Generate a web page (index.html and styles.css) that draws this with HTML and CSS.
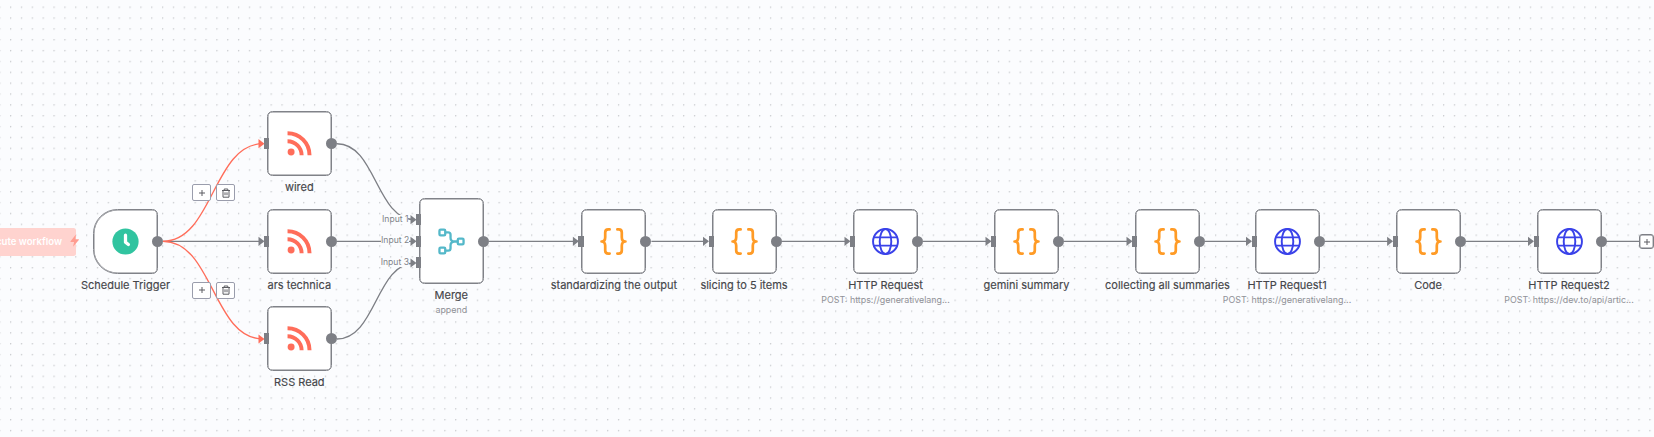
FILE: index.html
```
<!DOCTYPE html>
<html lang="en">
<head>
<meta charset="utf-8">
<title>Workflow canvas</title>
<link rel="stylesheet" href="styles.css">
</head>
<body>
<main class="canvas" id="canvas">
  <svg class="edges" id="edges" width="1654" height="437">
    <defs>
      <pattern id="grid" x="10" y="6.5" width="10.856" height="10.856" patternUnits="userSpaceOnUse">
        <circle cx=".7" cy=".7" r=".66" class="dot"/>
      </pattern>
    </defs>
    <rect width="1654" height="437" fill="url(#grid)"/>
  </svg>
  <div class="execute"><span>Execute workflow</span></div>
  <svg class="bolt" viewBox="0 0 10 14"><path d="M6.2 .5 .6 7.6Q.2 8.3 1 8.3H4.3L3.2 13.4 9.3 6.2Q9.7 5.5 8.9 5.5H5.7Z"/></svg>
</main>
<script src="canvas.js"></script>
</body>
</html>
```
FILE: styles.css
```
body {
  margin: 0;
  font-family: Inter, "Liberation Sans", sans-serif;
}
.canvas {
  position: relative;
  width: 1654px;
  height: 437px;
  overflow: hidden;
  background: #fbfcfe;
}
.edges { position: absolute; inset: 0; }
.dot { fill: #bcbec2; }
.edge { fill: none; stroke: #7d7f85; stroke-width: 1.35; }
.edge.active { stroke: #ff6d5a; }
.arrow { fill: #7d7f85; }
.arrow.active { fill: #ff6d5a; }
.node {
  position: absolute;
  width: 65px;
  display: flex;
  flex-direction: column;
  align-items: center;
}
.box {
  box-sizing: border-box;
  position: relative;
  width: 65px;
  height: 65px;
  flex: none;
  display: flex;
  align-items: center;
  justify-content: center;
  background: #fff;
  border: 1px solid #808288;
  border-radius: 5.5px;
  box-shadow: inset 0 0 0 .5px #808288;
}
.box.tall { height: 86px; }
.box.trigger { border-radius: 24.5px 5.5px 5.5px 24.5px; }
.box svg { width: 27px; height: 27px; }
.out {
  position: absolute;
  right: -6px;
  top: calc(50% - 5.5px);
  width: 11px;
  height: 11px;
  border-radius: 50%;
  background: #7d7f85;
}
.in {
  position: absolute;
  left: -4px;
  width: 5.4px;
  height: 11px;
  background: #7d7f85;
}
.label {
  margin-top: 4px;
  font-size: 11px;
  letter-spacing: -.01px;
  line-height: 14px;
  font-weight: 400;
  -webkit-text-stroke: .15px #45464a;
  color: #45464a;
  white-space: nowrap;
}
.sub {
  margin-top: 2px;
  font-size: 8.9px;
  line-height: 12px;
  color: #909197;
  white-space: nowrap;
}
.port {
  position: absolute;
  line-height: 9px;
  font-size: 8.6px;
  color: #808288;
  background: #fbfcfe;
  white-space: nowrap;
}
.execute {
  position: absolute;
  left: -50px;
  top: 227.5px;
  width: 126px;
  height: 28px;
  box-sizing: border-box;
  padding-right: 14px;
  border-radius: 2.5px;
  background: #ffd3cf;
  color: #fff;
  font-size: 9.6px;
  line-height: 27px;
  font-weight: 600;
  text-align: right;
}
.bolt { position: absolute; left: 69.5px; top: 233.5px; width: 9.5px; height: 13.5px; fill: #ff9d91; }
.tool {
  position: absolute;
  box-sizing: border-box;
  width: 19px;
  height: 17px;
  display: flex;
  align-items: center;
  justify-content: center;
  border: 1px solid #9a9dac;
  border-radius: 2px;
  background: #fff;
}
.tool svg { width: 10px; height: 10px; fill: none; stroke: #5c5d62; stroke-width: 1; }
.tool.add { width: 15px; height: 15px; border-color: #7d7f85; border-radius: 3px; box-shadow: inset 0 0 0 .4px #7d7f85; }
```
FILE: canvas.js
```
const icons = {
  clock: '<svg viewBox="0 0 28 28"><circle cx="14" cy="14" r="13.6" fill="#31c4a0"/><path d="M14 7.4V14.8L17 17.2" fill="none" stroke="#fff" stroke-width="3.4" stroke-linecap="round" stroke-linejoin="round"/></svg>',
  rss: '<svg viewBox="0 0 28 28" fill="none" stroke="#ff6d5a" stroke-width="4.1"><circle cx="5.3" cy="22.8" r="3.6" fill="#ff6d5a" stroke="none"/><path d="M1.6 11.6A14.6 14.6 0 0 1 16.2 26.2M1.6 3.4A22.8 22.8 0 0 1 24.4 26.2"/></svg>',
  merge: '<svg viewBox="0 0 28 28" fill="none" stroke="#54b8c9" stroke-width="2.4"><rect x="1.5" y="1.6" width="6" height="6" rx="1.2"/><rect x="1.5" y="20.4" width="6" height="6" rx="1.2"/><rect x="20.5" y="11" width="6" height="6" rx="1.2"/><path d="M7.5 4.6H10.5Q13 4.6 13 7.1V10Q13 14 17 14H20.5M17 14Q13 14 13 18V20.9Q13 23.4 10.5 23.4H7.5"/></svg>',
  code: '<svg viewBox="0 0 28 28" fill="none" stroke="#ff9b26" stroke-width="2.8" stroke-linecap="round" stroke-linejoin="round"><path d="M10 1.5H8.6Q5.4 1.5 5.4 4.7V9.6Q5.4 14 1.6 14Q5.4 14 5.4 18.4V23.3Q5.4 26.5 8.6 26.5H10M18 1.5H19.4Q22.6 1.5 22.6 4.7V9.6Q22.6 14 26.4 14Q22.6 14 22.6 18.4V23.3Q22.6 26.5 19.4 26.5H18"/></svg>',
  globe: '<svg viewBox="0 0 28 28" fill="none" stroke="#3a42e9" stroke-width="2"><circle cx="14" cy="14" r="12.9"/><ellipse cx="14" cy="14" rx="6" ry="12.9"/><path d="M2 9.7H26M2 18.3H26"/></svg>'
};
const plus = '<svg viewBox="0 0 10 10"><path d="M5 2V8M2 5H8"/></svg>';
const trash = '<svg viewBox="0 0 10 10"><path d="M1 2.5H9M3.2 2.3V1H6.8V2.3M2 2.5V9.2H8V2.5M4 4.3V7.2M6 4.3V7.2"/></svg>';
const post = 'POST: https://generativelang...';

// [left, top, icon, label, subtitle]
const nodes = [
  [93, 209, 'clock', 'Schedule Trigger'],
  [266.8, 111.2, 'rss', 'wired'],
  [266.8, 209, 'rss', 'ars technica'],
  [266.8, 306.4, 'rss', 'RSS Read'],
  [418.8, 198.2, 'merge', 'Merge', 'append'],
  [581.4, 209, 'code', 'standardizing the output'],
  [711.5, 209, 'code', 'slicing to 5 items'],
  [853, 209, 'globe', 'HTTP Request', post],
  [994, 209, 'code', 'gemini summary'],
  [1135, 209, 'code', 'collecting all summaries'],
  [1254.5, 209, 'globe', 'HTTP Request1', post],
  [1395.6, 209, 'code', 'Code'],
  [1536.5, 209, 'globe', 'HTTP Request2', 'POST: https://dev.to/api/artic...']
];
const canvas = document.getElementById('canvas');
const add = html => canvas.insertAdjacentHTML('beforeend', html);

let paths = '';
const edge = (x1, y1, x2, y2, active) => {
  const cls = active ? ' active' : '';
  const start = x1 + 5;
  const end = x2 - 1;
  const mid = (start + end) / 2;
  paths += `<path class="edge${cls}" d="M${start} ${y1}C${mid} ${y1} ${mid} ${y2} ${end} ${y2}"/>` +
    `<path class="arrow${cls}" d="M${x2 - 5.5} ${y2 - 4.6}L${x2 + .5} ${y2}L${x2 - 5.5} ${y2 + 4.6}Z"/>`;
};
const Y = 241.3;
edge(158, Y, 264, Y);
edge(158, Y, 264, 143.7, true);
edge(158, Y, 264, 339, true);
edge(332, 143.7, 416, 219.7);
edge(332, Y, 416, Y);
edge(332, 339, 416, 263);
nodes.slice(4, -1).forEach((n, i) => edge(n[0] + 65, Y, nodes[i + 5][0] - 3, Y));
paths += `<path class="edge" d="M1602 ${Y}H1640"/>`;
document.getElementById('edges').insertAdjacentHTML('beforeend', paths);

nodes.forEach(([x, y, icon, label, sub]) => {
  const kind = icon === 'clock' ? ' trigger' : icon === 'merge' ? ' tall' : '';
  const ports = icon === 'clock' ? [] : icon === 'merge' ? [14.8, 36.4, 58] : [25.9];
  add(`<div class="node" style="left:${x}px;top:${y}px"><div class="box${kind}">${icons[icon]}` +
    ports.map(t => `<i class="in" style="top:${t}px"></i>`).join('') +
    `<i class="out"></i></div><div class="label">${label}</div>` +
    (sub ? `<div class="sub">${sub}</div>` : '') + '</div>');
});
[[382, 215.4], [381, 236.4], [380.7, 258.4]].forEach(([x, y], i) =>
  add(`<div class="port" style="left:${x}px;top:${y}px">Input ${i + 1}</div>`));
[184, 281.6].forEach(y => {
  add(`<div class="tool" style="left:192px;top:${y}px">${plus}</div>`);
  add(`<div class="tool" style="left:216.4px;top:${y}px">${trash}</div>`);
});
add(`<div class="tool add" style="left:1639px;top:234px">${plus}</div>`);
```
